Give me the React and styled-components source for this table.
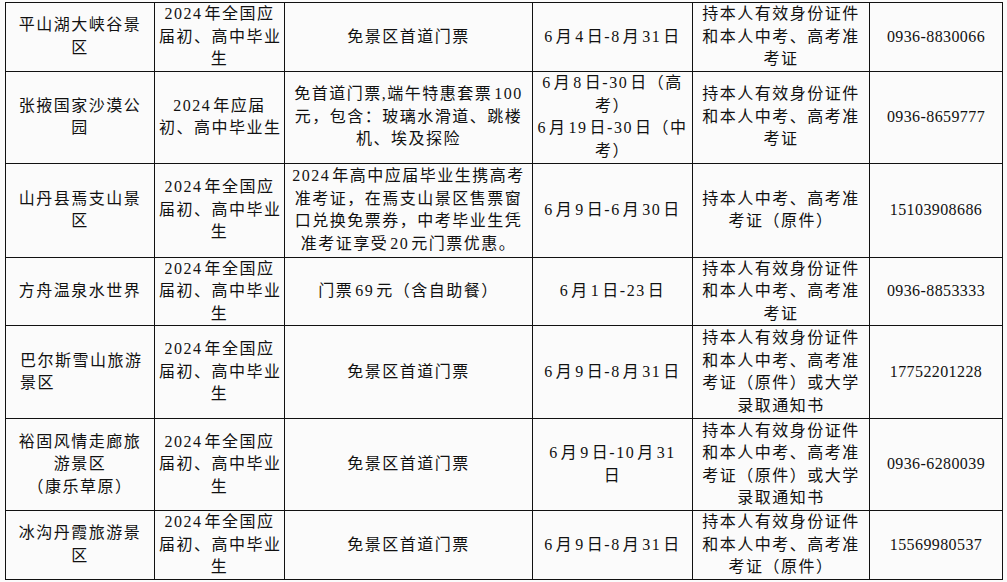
import React from 'react'
import styled, { createGlobalStyle } from 'styled-components'

const GlobalStyle = createGlobalStyle`
  html, body {
    margin: 0;
    padding: 0;
    background: #fbfbfb;
  }
`

const Page = styled.div`
  padding: 2px 0 0 5px;
  width: 1007px;
  height: 582px;
  box-sizing: border-box;
  overflow: hidden;
`

const Table = styled.table`
  border-collapse: collapse;
  table-layout: fixed;
  width: 998px;
  color: #111;
  font-family: 'Liberation Serif', 'Noto Sans CJK SC', serif;
  font-size: 16px;
  letter-spacing: 1.5px;
  text-autospace: normal;
`

const Row = styled.tr`
  height: ${props => props.$h}px;
`

const Cell = styled.td`
  border: 1px solid #111;
  padding: 0 4px;
  vertical-align: middle;
  text-align: ${props => props.$align || 'center'};
  line-height: 22.5px;
  letter-spacing: ${props => (props.$tight ? '0.4px' : '1.5px')};
  ${props => props.$align === 'left' && 'padding-left: 14px;'}
`

const Line = styled.div`
  white-space: nowrap;
`

const widths = [149, 130, 248, 160, 177, 133]

const grad = ['2024年全国应', '届初、高中毕业', '生']
const idCard = ['持本人有效身份证件', '和本人中考、高考准', '考证']
const idOrig = ['持本人有效身份证件', '和本人中考、高考准', '考证（原件）或大学', '录取通知书']

const rows = [
  {
    h: 68,
    name: ['平山湖大峡谷景', '区'],
    who: grad,
    offer: ['免景区首道门票'],
    date: ['6月4日-8月31日'],
    need: idCard,
    phone: '0936-8830066',
  },
  {
    h: 92,
    name: ['张掖国家沙漠公', '园'],
    who: ['2024年应届', '初、高中毕业生'],
    offer: ['免首道门票,端午特惠套票100', '元，包含：玻璃水滑道、跳楼', '机、埃及探险'],
    date: ['6月8日-30日（高', '考）', '6月19日-30日（中', '考）'],
    need: idCard,
    phone: '0936-8659777',
  },
  {
    h: 94,
    name: ['山丹县焉支山景', '区'],
    who: grad,
    offer: [
      '2024年高中应届毕业生携高考',
      '准考证，在焉支山景区售票窗',
      '口兑换免票券，中考毕业生凭',
      '准考证享受20元门票优惠。',
    ],
    date: ['6月9日-6月30日'],
    need: ['持本人中考、高考准', '考证（原件）'],
    phone: '15103908686',
  },
  {
    h: 68,
    name: ['方舟温泉水世界'],
    who: grad,
    offer: ['门票69元（含自助餐）'],
    date: ['6月1日-23日'],
    need: idCard,
    phone: '0936-8853333',
  },
  {
    h: 93,
    name: ['巴尔斯雪山旅游', '景区'],
    nameAlign: 'left',
    who: grad,
    offer: ['免景区首道门票'],
    date: ['6月9日-8月31日'],
    need: idOrig,
    phone: '17752201228',
  },
  {
    h: 92,
    name: ['裕固风情走廊旅', '游景区', '（康乐草原）'],
    who: grad,
    offer: ['免景区首道门票'],
    date: ['6月9日-10月31', '日'],
    need: idOrig,
    phone: '0936-6280039',
  },
  {
    h: 68,
    name: ['冰沟丹霞旅游景', '区'],
    who: grad,
    offer: ['免景区首道门票'],
    date: ['6月9日-8月31日'],
    need: ['持本人有效身份证件', '和本人中考、高考准', '考证（原件）'],
    phone: '15569980537',
  },
]

const Lines = ({ items }) => items.map((t, i) => <Line key={i}>{t}</Line>)

export default function App() {
  return (
    <Page>
      <GlobalStyle />
      <Table>
        <colgroup>
          {widths.map((w, i) => (
            <col key={i} style={{ width: w }} />
          ))}
        </colgroup>
        <tbody>
          {rows.map((r, i) => (
            <Row key={i} $h={r.h}>
              <Cell $align={r.nameAlign}>
                <Lines items={r.name} />
              </Cell>
              <Cell>
                <Lines items={r.who} />
              </Cell>
              <Cell>
                <Lines items={r.offer} />
              </Cell>
              <Cell>
                <Lines items={r.date} />
              </Cell>
              <Cell>
                <Lines items={r.need} />
              </Cell>
              <Cell $tight>{r.phone}</Cell>
            </Row>
          ))}
        </tbody>
      </Table>
    </Page>
  )
}
